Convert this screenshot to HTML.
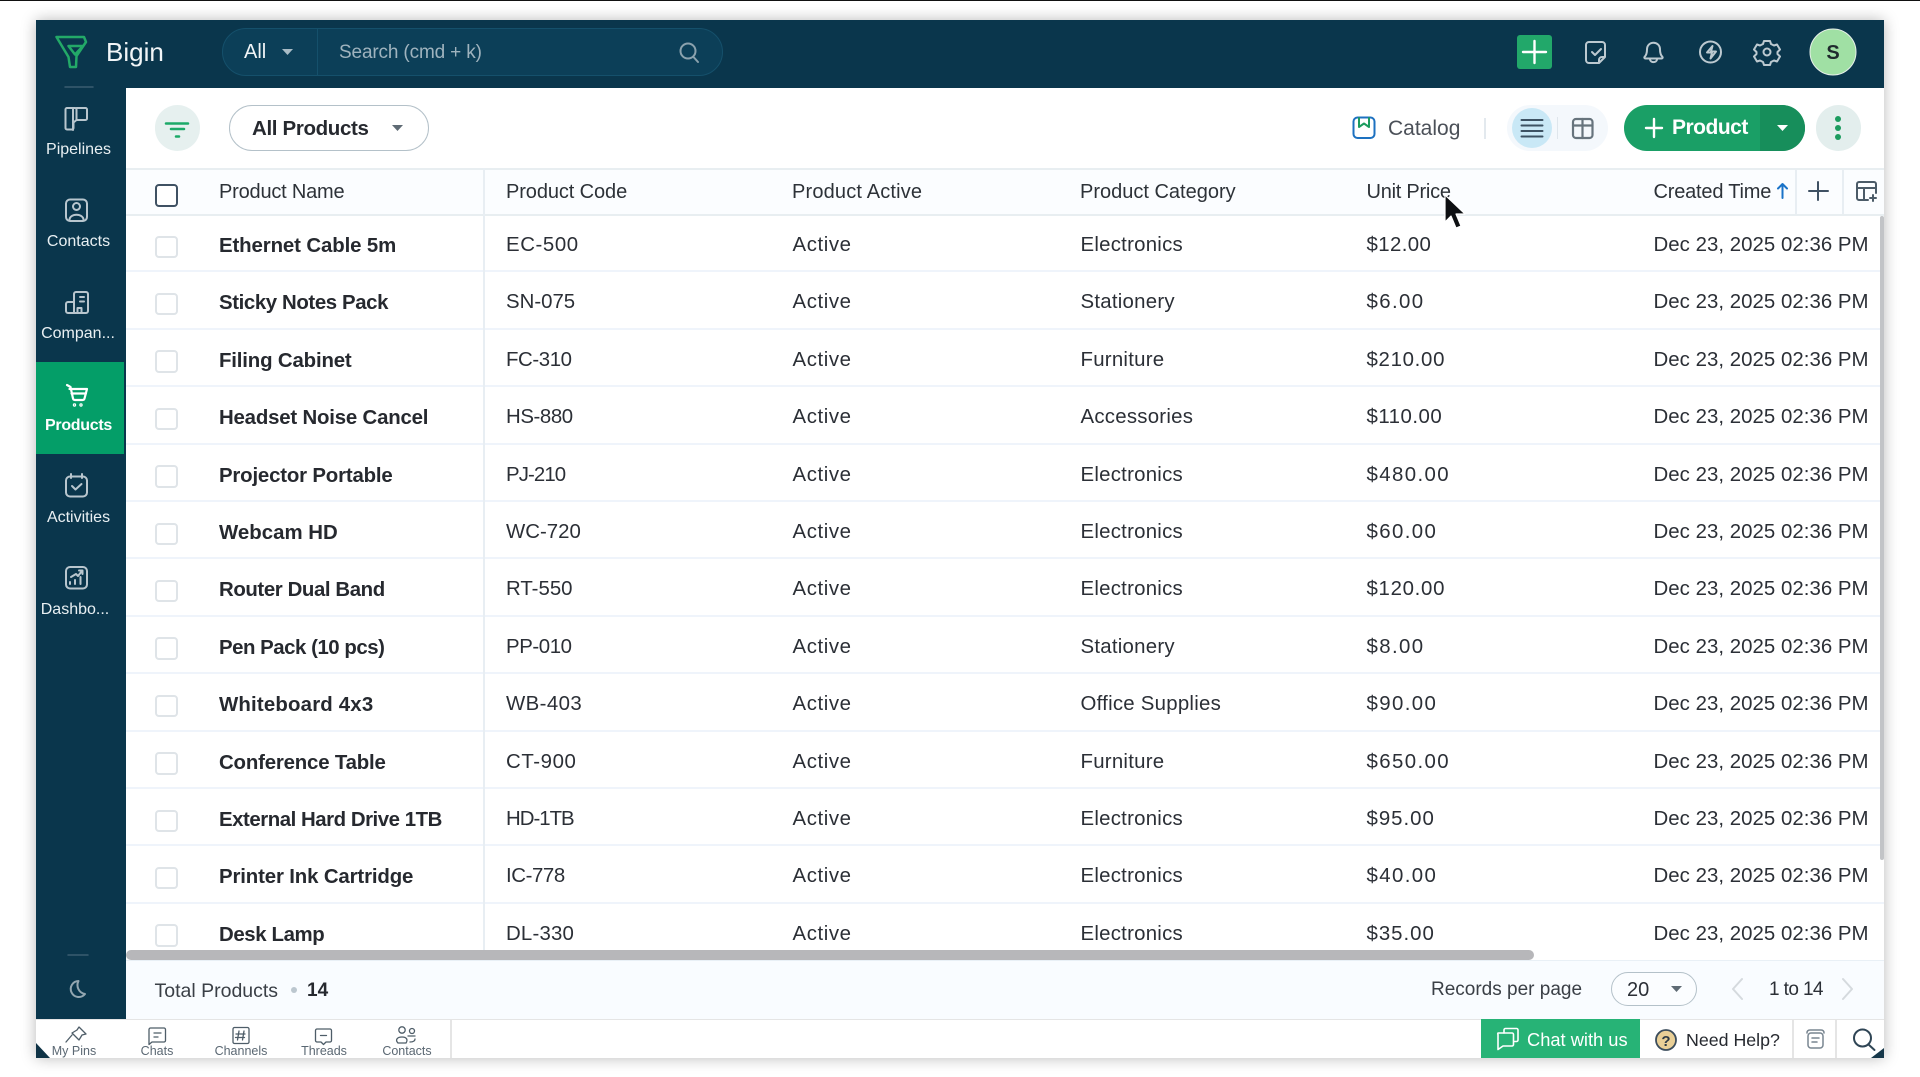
<!DOCTYPE html>
<html><head><meta charset="utf-8"><style>
*{box-sizing:border-box}
html,body{margin:0;padding:0;width:1920px;height:1077px;overflow:hidden;background:#fff;font-family:"Liberation Sans",sans-serif;color:#2b2f36}
.a{position:absolute;white-space:nowrap}
#topline{position:absolute;left:0;top:0;width:1920px;height:1px;background:#111}
#win{position:absolute;left:36px;top:20px;width:1848px;height:1038px;background:#fff;box-shadow:0 0 14px rgba(0,0,0,.28)}
#hdr{position:absolute;left:36px;top:20px;width:1848px;height:68px;background:#0a364c}
#side{position:absolute;left:36px;top:20px;width:90px;height:999px;background:#0a364c}
#main{position:absolute;left:126px;top:88px;width:1758px;height:931px;background:#fff;border-radius:5px 0 0 0}
.sl{position:absolute;left:33.5px;width:90px;text-align:center;font-size:16px;color:#e9f0f3;line-height:18px;white-space:nowrap}
#act{position:absolute;left:36px;top:362px;width:88px;height:92px;background:#049e68}
#search{position:absolute;left:222px;top:28px;width:501px;height:48px;border-radius:24px;background:#0c3f58;border:1px solid #15506b}
#search i{position:absolute;left:94px;top:0;width:1px;height:46px;background:#15506b}
.pill{position:absolute;height:46px;border-radius:23px}
#thead{position:absolute;left:126px;top:168px;width:1758px;height:48px;background:#fbfdff;border-top:2px solid #e8eef1;border-bottom:2px solid #e8eef1}
.th{position:absolute;top:192px;transform:translateY(-50%);font-size:20px;line-height:24px;color:#2d3238;white-space:nowrap}
#tb{position:absolute;left:126px;top:215px;width:1758px;height:735px;overflow:hidden;background:#fff}
.r{position:absolute;left:0;width:1758px;height:57.4px;border-bottom:2px solid #eff4fb}
.r span{position:absolute;top:0;line-height:61px;font-size:20.4px;color:#2b2f36;white-space:nowrap}
.r b{position:absolute;left:93px;top:0;line-height:63px;font-size:20.4px;font-weight:bold;color:#26292f;white-space:nowrap}
.r u{position:absolute;left:29px;top:20.5px;width:22.5px;height:22.5px;border:2.5px solid #dfe4e8;border-radius:4px;background:#fff}
.c1{left:380px}.c2{left:666.500px;letter-spacing:.6px}.c3{left:954.500px;letter-spacing:.25px}.c4{left:1240.5px}.c5{left:1527.5px;letter-spacing:.04px}
#vd{position:absolute;left:483px;top:168px;width:1.5px;height:782px;background:#e8eef3}
#hs{position:absolute;left:126px;top:950px;width:1408px;height:10px;border-radius:5px;background:#b7b7ba}
#vs{position:absolute;left:1880px;top:216px;width:4px;height:644px;border-radius:2px;background:#c2c4c7}
#foot{position:absolute;left:126px;top:960px;width:1758px;height:59px;background:#f9fcff;border-top:1px solid #e9f0f6}
#bar{position:absolute;left:36px;top:1019px;width:1848px;height:39px;background:#fff;border-top:1px solid #e5e5e5}
.t{position:absolute;top:1044px;width:90px;text-align:center;font-size:12.5px;line-height:15px;color:#5b6873}
svg{position:absolute;left:0;top:0}
</style></head><body>
<div id="topline"></div>
<div id="win"></div>
<div id="hdr"></div>
<div id="side"></div>
<div id="act"></div>
<div id="main"></div>

<div class="a" style="left:106px;top:36px;font-size:26px;line-height:32px;color:#f1f5f7">Bigin</div>
<div id="search"><i></i></div>
<div class="a" style="left:244px;top:40px;font-size:20px;line-height:24px;color:#f1f5f7">All</div>
<div class="a" style="left:339px;top:41px;font-size:19px;line-height:24px;color:#9fb3be;letter-spacing:-.15px">Search (cmd + k)</div>

<div class="sl" style="top:141px">Pipelines</div>
<div class="sl" style="top:233px">Contacts</div>
<div class="sl" style="top:325px;left:33px">Compan...</div>
<div class="sl" style="top:417px;color:#fff;font-weight:bold;letter-spacing:-.3px">Products</div>
<div class="sl" style="top:509px">Activities</div>
<div class="sl" style="top:601px;left:30px">Dashbo...</div>

<div class="pill" style="left:155px;top:105px;width:45px;background:#e6f0ef"></div>
<div class="pill" style="left:229px;top:105px;width:200px;background:#fff;border:1.5px solid #b4c1c9"></div>
<div class="a" style="left:252px;top:115px;font-size:20.5px;line-height:28px;font-weight:bold;color:#26292f;letter-spacing:-.35px">All Products</div>
<div class="a" style="left:1388px;top:115px;font-size:21px;line-height:28px;color:#4b5058">Catalog</div>
<div class="a" style="left:1484px;top:118px;width:1.5px;height:21px;background:#e3e9ee"></div>
<div class="pill" style="left:1507px;top:105px;width:101px;background:#f4f8fc"></div>
<div class="a" style="left:1512px;top:108px;width:40px;height:40px;border-radius:20px;background:#c9e8f6"></div>
<div class="a" style="left:1557px;top:117px;width:1px;height:22px;background:#dfe6ec"></div>
<div class="pill" style="left:1624px;top:105px;width:181px;background:#1a9f66;overflow:hidden"><div class="a" style="left:136px;top:0;width:45px;height:46px;background:#178e5b"></div></div>
<div class="a" style="left:1672px;top:114px;font-size:21px;line-height:28px;color:#fff;font-weight:bold;letter-spacing:-.5px">Product</div>
<div class="pill" style="left:1816px;top:105px;width:45px;background:#e3eeed"></div>

<div id="tb">
<div class="r" style="top:0"><u></u><b style="letter-spacing:-.11px">Ethernet Cable 5m</b><span class="c1" style="letter-spacing:.6px">EC-500</span><span class="c2">Active</span><span class="c3">Electronics</span><span class="c4" style="letter-spacing:.4px">$12.00</span><span class="c5">Dec 23, 2025 02:36 PM</span></div>
<div class="r" style="top:57.4px"><u></u><b style="letter-spacing:-.39px">Sticky Notes Pack</b><span class="c1">SN-075</span><span class="c2">Active</span><span class="c3">Stationery</span><span class="c4" style="letter-spacing:1.4px">$6.00</span><span class="c5">Dec 23, 2025 02:36 PM</span></div>
<div class="r" style="top:114.8px"><u></u><b style="letter-spacing:-.16px">Filing Cabinet</b><span class="c1" style="letter-spacing:-.4px">FC-310</span><span class="c2">Active</span><span class="c3">Furniture</span><span class="c4" style="letter-spacing:.7px">$210.00</span><span class="c5">Dec 23, 2025 02:36 PM</span></div>
<div class="r" style="top:172.2px"><u></u><b style="letter-spacing:-.19px">Headset Noise Cancel</b><span class="c1" style="letter-spacing:-.4px">HS-880</span><span class="c2">Active</span><span class="c3">Accessories</span><span class="c4" style="letter-spacing:.5px">$110.00</span><span class="c5">Dec 23, 2025 02:36 PM</span></div>
<div class="r" style="top:229.6px"><u></u><b style="letter-spacing:-.18px">Projector Portable</b><span class="c1" style="letter-spacing:-.9px">PJ-210</span><span class="c2">Active</span><span class="c3">Electronics</span><span class="c4" style="letter-spacing:1.4px">$480.00</span><span class="c5">Dec 23, 2025 02:36 PM</span></div>
<div class="r" style="top:287px"><u></u><b style="letter-spacing:.02px">Webcam HD</b><span class="c1">WC-720</span><span class="c2">Active</span><span class="c3">Electronics</span><span class="c4" style="letter-spacing:1.4px">$60.00</span><span class="c5">Dec 23, 2025 02:36 PM</span></div>
<div class="r" style="top:344.4px"><u></u><b style="letter-spacing:-.4px">Router Dual Band</b><span class="c1">RT-550</span><span class="c2">Active</span><span class="c3">Electronics</span><span class="c4" style="letter-spacing:.7px">$120.00</span><span class="c5">Dec 23, 2025 02:36 PM</span></div>
<div class="r" style="top:401.8px"><u></u><b style="letter-spacing:-.47px">Pen Pack (10 pcs)</b><span class="c1" style="letter-spacing:-.4px">PP-010</span><span class="c2">Active</span><span class="c3">Stationery</span><span class="c4" style="letter-spacing:1.4px">$8.00</span><span class="c5">Dec 23, 2025 02:36 PM</span></div>
<div class="r" style="top:459.2px"><u></u><b style="letter-spacing:.18px">Whiteboard 4x3</b><span class="c1" style="letter-spacing:.4px">WB-403</span><span class="c2">Active</span><span class="c3">Office Supplies</span><span class="c4" style="letter-spacing:1.4px">$90.00</span><span class="c5">Dec 23, 2025 02:36 PM</span></div>
<div class="r" style="top:516.6px"><u></u><b style="letter-spacing:-.18px">Conference Table</b><span class="c1" style="letter-spacing:.6px">CT-900</span><span class="c2">Active</span><span class="c3">Furniture</span><span class="c4" style="letter-spacing:1.4px">$650.00</span><span class="c5">Dec 23, 2025 02:36 PM</span></div>
<div class="r" style="top:574px"><u></u><b style="letter-spacing:-.46px">External Hard Drive 1TB</b><span class="c1" style="letter-spacing:-1px">HD-1TB</span><span class="c2">Active</span><span class="c3">Electronics</span><span class="c4" style="letter-spacing:1px">$95.00</span><span class="c5">Dec 23, 2025 02:36 PM</span></div>
<div class="r" style="top:631.4px"><u></u><b style="letter-spacing:-.14px">Printer Ink Cartridge</b><span class="c1" style="letter-spacing:-.4px">IC-778</span><span class="c2">Active</span><span class="c3">Electronics</span><span class="c4" style="letter-spacing:1.4px">$40.00</span><span class="c5">Dec 23, 2025 02:36 PM</span></div>
<div class="r" style="top:688.8px"><u></u><b style="letter-spacing:-.38px">Desk Lamp</b><span class="c1" style="letter-spacing:.2px">DL-330</span><span class="c2">Active</span><span class="c3">Electronics</span><span class="c4" style="letter-spacing:1px">$35.00</span><span class="c5">Dec 23, 2025 02:36 PM</span></div>
</div>

<div id="thead"></div>
<div id="vd"></div>
<div class="a" style="left:155px;top:184px;width:22.5px;height:23px;border:2.5px solid #3f5163;border-radius:4px;background:#fff"></div>
<div class="th" style="left:219px;letter-spacing:-.2px">Product Name</div>
<div class="th" style="left:506px;letter-spacing:-.1px">Product Code</div>
<div class="th" style="left:792px;letter-spacing:.17px">Product Active</div>
<div class="th" style="left:1080px">Product Category</div>
<div class="th" style="left:1366.5px;letter-spacing:-.25px">Unit Price</div>
<div class="th" style="left:1653.5px;letter-spacing:-.2px">Created Time</div>
<div class="a" style="left:1795px;top:170px;width:1.5px;height:44px;background:#e8eef3"></div>
<div class="a" style="left:1842px;top:170px;width:1.5px;height:44px;background:#e8eef3"></div>

<div id="hs"></div>
<div id="vs"></div>
<div id="foot"></div>
<div class="a" style="left:154.500px;top:979px;font-size:19.500px;line-height:24px;color:#3a3f46">Total Products</div>
<div class="a" style="left:291px;top:987px;width:6px;height:6px;border-radius:3px;background:#bcc7cf"></div>
<div class="a" style="left:307px;top:979px;font-size:19px;line-height:24px;color:#26292f;font-weight:bold">14</div>
<div class="a" style="left:1431px;top:978px;font-size:19px;line-height:24px;color:#3a3f46">Records per page</div>
<div class="a" style="left:1611px;top:972px;width:86px;height:34px;border-radius:17px;border:1.5px solid #b4c1c9;background:#fbfdff"></div>
<div class="a" style="left:1627px;top:978px;font-size:20px;line-height:24px;color:#2b2f36">20</div>
<div class="a" style="left:1769px;top:978px;font-size:19px;line-height:24px;color:#2b2f36;letter-spacing:-.6px">1 to 14</div>

<div id="bar"></div>
<div class="a" style="left:450px;top:1019px;width:1.5px;height:39px;background:#e5e5e5"></div>
<div class="t" style="left:29px">My Pins</div>
<div class="t" style="left:112px">Chats</div>
<div class="t" style="left:196px">Channels</div>
<div class="t" style="left:279px">Threads</div>
<div class="t" style="left:362px">Contacts</div>
<div class="a" style="left:1481px;top:1019px;width:159px;height:39px;background:#27b376"></div>
<div class="a" style="left:1527px;top:1029px;font-size:18.300px;line-height:22px;color:#fff">Chat with us</div>
<div class="a" style="left:1686px;top:1029px;font-size:17.800px;line-height:22px;color:#26292f">Need Help?</div>
<div class="a" style="left:1792px;top:1019px;width:1.5px;height:39px;background:#e5e5e5"></div>
<div class="a" style="left:1835px;top:1019px;width:1.5px;height:39px;background:#e5e5e5"></div>

<svg width="1920" height="1077" viewBox="0 0 1920 1077" fill="none" stroke-linecap="round" stroke-linejoin="round">
<!-- logo -->
<g stroke="#23a968" stroke-width="2.500">
<path d="M56.500 37H84L86 42 76.500 56 76 67H70L68.500 57Z"/><path d="M68.500 46H83L75 54.500Z"/>
</g>
<path d="M287 49h11l-5.500 6z" transform="translate(-5 0)" fill="#a9bcc6"/>
<g stroke="#8ba2ae" stroke-width="2"><circle cx="688" cy="51" r="7.500"/><path d="M693.500 57L698 62"/></g>
<path d="M65 87H93" stroke="#3b5d70" stroke-width="1.500"/>
<!-- sidebar icons -->
<g stroke="#b8c6ce" stroke-width="2">
<path d="M67 108h8a1.500 1.500 0 0 1 1.500 1.500V120l-3 2.500V128a1.500 1.500 0 0 1-1.500 1.500H67a1.500 1.500 0 0 1-1.500-1.500V109.500A1.500 1.500 0 0 1 67 108ZM76.500 108h9a1.500 1.500 0 0 1 1.500 1.500v9a1.500 1.500 0 0 1-1.500 1.500h-9M73 108v22"/>
<rect x="66" y="199.500" width="21" height="21.500" rx="4"/><circle cx="76.500" cy="206.500" r="3.500"/><path d="M69.500 220c0-7 14-7 14 0"/>
<path d="M66 304a2 2 0 0 1 2-2h6v11h-6a2 2 0 0 1-2-2zM74 302v-8a2 2 0 0 1 2-2h10a2 2 0 0 1 2 2v17a2 2 0 0 1-2 2H74M80 297h4M80 301.500h4M77.500 313v-5h4v5"/>
<rect x="66" y="476.500" width="21" height="20" rx="4"/><path d="M71 474v4M82 474v4M72 486l3.500 3.500L81.500 484"/>
<rect x="66" y="567" width="21" height="21.500" rx="4"/><path d="M70 584v-2M75 584v-4M80.500 584v-7M71 577l5-3 2 2 4-5M79 570.500h3.500v3.500"/>
<path d="M78.500 981a8 8 0 1 0 6.500 13 9 9 0 0 1-6.500-13Z" stroke="#93a6b0"/>
</g>
<g stroke="#fff" stroke-width="2.200">
<path d="M67 385l3.500 2 2.500 11.500a2 2 0 0 0 2 1.500h7.500a2 2 0 0 0 2-1.500L87 389H69.500M71.500 393.500H86"/>
<circle cx="74.500" cy="405" r=".6"/><circle cx="81" cy="405" r=".6"/>
</g>
<path d="M68 955H88" stroke="#3b5d70" stroke-width="1.500"/>
<!-- filter -->
<g stroke-width="2.500" stroke="#1ca968"><path d="M166 123.500H188M171 129H184"/><path d="M176 136.500H179"/></g>
<path d="M392 125h11l-5.500 6z" fill="#5f6b74"/>
<!-- top right -->
<rect x="1517" y="35" width="35" height="34" rx="3" fill="#22a86a"/>
<path d="M1534.500 41V63M1523 52H1546" stroke="#fff" stroke-width="2.400"/>
<g stroke="#bcc9d0" stroke-width="2">
<path d="M1589 42h13a3 3 0 0 1 3 3v12l-6 6h-10a3 3 0 0 1-3-3V45a3 3 0 0 1 3-3ZM1592 52l3 3 6-6M1599 63v-3a3 3 0 0 1 3-3h3"/>
<path d="M1644.500 57c2-2 2.500-4 2.500-7.500 0-9 13-9 13 0 0 3.500 .5 5.500 2.500 7.500a1 1 0 0 1-1 1.500h-16a1 1 0 0 1-1-1.500ZM1650 59.500c.500 3.500 6.500 3.500 7 0"/>
<circle cx="1710.500" cy="52" r="10.500"/><path d="M1712.500 46l-5.500 6.500h5l-1.500 6 5.500-7h-5z"/>
<path d="M1764 41h6l1 3 3 1.500 3-1 3 5-2.500 2.500v2l2.500 2.500-3 5-3-1-3 1.500-1 3h-6l-1-3-3-1.500-3 1-3-5 2.500-2.500v-2l-2.500-2.500 3-5 3 1 3-1.500z"/><circle cx="1767" cy="52" r="3.500"/>
</g>
<circle cx="1833" cy="52" r="23" fill="#a0e0a4" stroke="#e8f0ea" stroke-width="1"/>
<text x="1833" y="59" text-anchor="middle" font-family="Liberation Sans" font-size="20" font-weight="bold" fill="#1f2a2d">S</text>
<!-- catalog -->
<rect x="1353.500" y="117.500" width="21" height="20.500" rx="4" stroke="#1d71c0" stroke-width="2"/>
<path d="M1359 118V127L1364 123.500L1369 127V118" stroke="#1c9c5f" stroke-width="2"/>
<!-- list / table toggle -->
<path d="M1521.500 120H1542.500M1521.500 125.500H1542.500M1521.500 131H1542.500M1521.500 136.500H1542.500" stroke="#3d5263" stroke-width="2"/>
<g stroke="#67747d" stroke-width="2.200"><rect x="1573" y="119" width="19.500" height="19" rx="3"/><path d="M1573 125.500H1592.500M1582.500 119V138"/></g>
<path d="M1654 119V137M1646 128H1662" stroke="#fff" stroke-width="2.400"/>
<path d="M1777 125h11l-5.500 6z" fill="#fff"/>
<g fill="#1c9c5f"><circle cx="1838" cy="119" r="3"/><circle cx="1838" cy="128" r="3"/><circle cx="1838" cy="137" r="3"/></g>
<!-- header icons -->
<path d="M1782.500 198V184M1778 188.500L1782.500 184 1787 188.500" stroke="#1a73c8" stroke-width="2"/>
<path d="M1818 182V200M1809 191H1828" stroke="#3f5163" stroke-width="2"/>
<g stroke="#4b5b68" stroke-width="2"><path d="M1876 193v-9a2 2 0 0 0-2-2h-15a2 2 0 0 0-2 2v14a2 2 0 0 0 2 2h9M1857 188H1876M1864 188V200"/><path d="M1873 195V201M1870 198H1876"/></g>
<!-- cursor -->
<path d="M1445 195V222L1451 216 1456 228 1461 226 1456 214H1465Z" fill="#0d0f12" stroke="#fff" stroke-width="1.200"/>
<!-- footer -->
<path d="M1671 986h11l-5.500 6z" fill="#5f6b74"/>
<path d="M1742 979L1733 989 1742 999M1843 979L1852 989 1843 999" stroke="#d5dade" stroke-width="2"/>
<!-- bottom tabs -->
<g stroke="#4e5d68" stroke-width="1.300">
<path d="M79 1027l7 7-4 1-3 5-7-7 5-3zM72 1035l-6 7"/>
<path d="M151 1028h13a1.500 1.500 0 0 1 1.500 1.500v11a1.500 1.500 0 0 1-1.500 1.500h-12l-3 2.500v-15a1.500 1.500 0 0 1 1.500-1.500ZM154 1033h7M154 1037h4"/>
<rect x="233" y="1027.500" width="16" height="16" rx="1.500"/><path d="M239 1031l-1.500 9M244 1031l-1.500 9M236 1034h9M235.500 1037.500h9"/>
<path d="M317 1029h13a1.500 1.500 0 0 1 1.500 1.500v10a1.500 1.500 0 0 1-1.500 1.500h-4l-2.500 2.500-2.500-2.500h-4a1.500 1.500 0 0 1-1.500-1.500v-10a1.500 1.500 0 0 1 1.500-1.500ZM320.500 1035.500h6"/>
<circle cx="402" cy="1030" r="3.200"/><circle cx="412" cy="1031" r="2.500"/><path d="M398 1043c-3-3-1-6 4-6s6 3 4 6zM408 1036h7M410 1042c3 0 5-1 5-3"/>
</g>
<g stroke="#fff" stroke-width="1.600"><path d="M1504 1033v-3a1.500 1.500 0 0 1 1.500-1.500h11a1.500 1.500 0 0 1 1.500 1.500v10a1.500 1.500 0 0 1-1.500 1.500H1514"/><path d="M1498 1033h14a1.500 1.500 0 0 1 1.500 1.500v10a1.500 1.500 0 0 1-1.500 1.500h-9l-5 3.500V1034.500A1.500 1.500 0 0 1 1498 1033Z"/></g>
<circle cx="1666" cy="1040" r="10" fill="#e9cf96" stroke="#3c4d5c" stroke-width="1.800"/>
<text x="1666" y="1046" text-anchor="middle" font-family="Liberation Sans" font-size="15" font-weight="bold" fill="#2d3a45">?</text>
<g stroke="#788590" stroke-width="1.500"><rect x="1808" y="1033" width="15" height="15" rx="3"/><path d="M1807 1033c0-2 1-3 3-3h11c2 0 3 1 3 3M1812 1038h7M1812 1042h5"/></g>
<g stroke="#2f4555" stroke-width="2"><circle cx="1862.500" cy="1038" r="8.500"/><path d="M1868.500 1044.500L1874.500 1050"/></g>
<!-- corners -->
<path d="M36 1043L50 1058H36Z" fill="#0f3346"/>
<path d="M1884 1048V1058H1871Z" fill="#16384a"/>
</svg>
</body></html>
